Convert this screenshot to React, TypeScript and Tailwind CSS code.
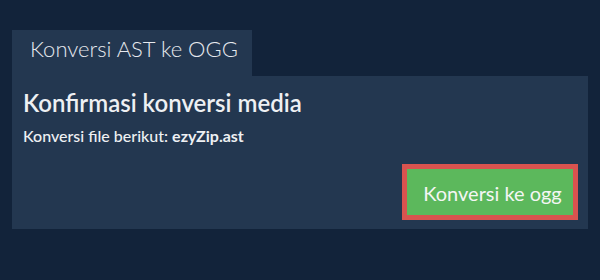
export default function App() {
  return (
    <div className="h-[280px] w-[600px] bg-[#12233a] px-3 pt-[30px] font-['Lato',sans-serif]">
      <div className="flex">
        <div className="h-[46px] w-[240px] bg-[#233750] pl-[18px] pt-[6px] text-[22px] font-light leading-[26px] text-[#e6e9ee]">
          Konversi AST ke OGG
        </div>
      </div>
      <div className="flex h-[153px] w-[576px] flex-col bg-[#233750] px-[11px] pt-[13px]">
        <h2 className="text-[24px] font-semibold leading-[28px] text-[#eef0f3]">
          Konfirmasi konversi media
        </h2>
        <p className="mt-[9px] text-[16px] font-medium leading-[20px] text-[#eef0f3]">
          Konversi file berikut: <span className="font-bold">ezyZip.ast</span>
        </p>
        <div className="mt-[18px] flex justify-end">
          <button className="mr-[-1px] h-[56px] w-[176px] border-[5px] border-[#d9534f] bg-[#5cb85c] pl-[5px] pt-[2px] text-[20px] leading-[24px] text-[#f4f6f4]">
            Konversi ke ogg
          </button>
        </div>
      </div>
    </div>
  );
}
